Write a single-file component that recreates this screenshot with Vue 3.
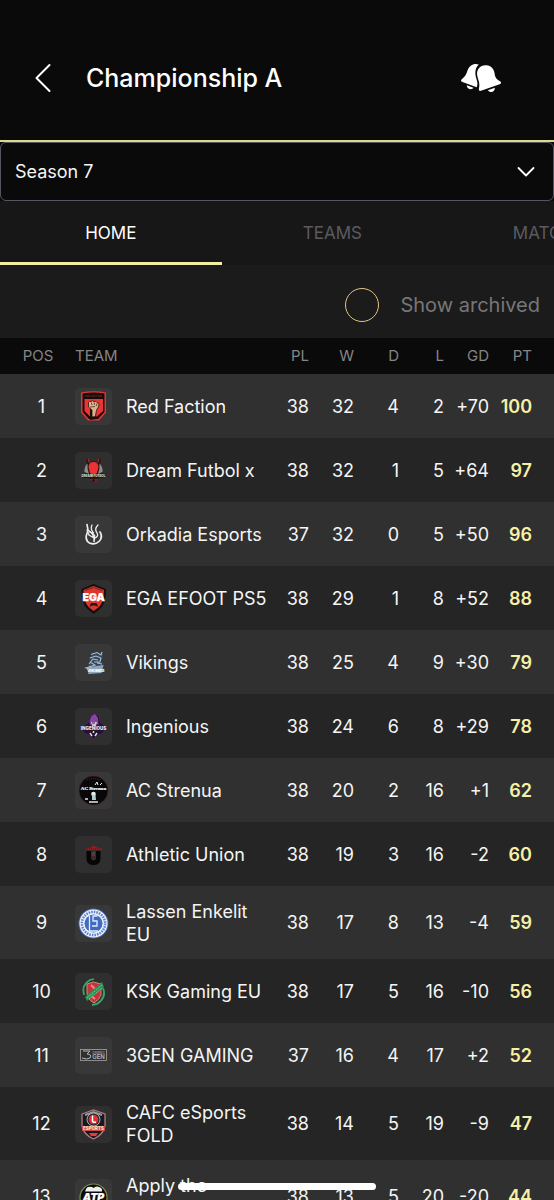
<script setup>
import { ref } from 'vue'

const season = ref('Season 7')
const tab = ref('HOME')
const tabs = ['HOME', 'TEAMS', 'MATCHES']
const archived = ref(false)

const rows = [
  ['Red Faction', 38, 32, 4, 2, '+70', 100],
  ['Dream Futbol x', 38, 32, 1, 5, '+64', 97],
  ['Orkadia Esports', 37, 32, 0, 5, '+50', 96],
  ['EGA EFOOT PS5', 38, 29, 1, 8, '+52', 88],
  ['Vikings', 38, 25, 4, 9, '+30', 79],
  ['Ingenious', 38, 24, 6, 8, '+29', 78],
  ['AC Strenua', 38, 20, 2, 16, '+1', 62],
  ['Athletic Union', 38, 19, 3, 16, '-2', 60],
  ['Lassen Enkelit EU', 38, 17, 8, 13, '-4', 59],
  ['KSK Gaming EU', 38, 17, 5, 16, '-10', 56],
  ['3GEN GAMING', 37, 16, 4, 17, '+2', 52],
  ['CAFC eSports FOLD', 38, 14, 5, 19, '-9', 47],
  ['Apply the Pressure', 38, 13, 5, 20, '-20', 44],
].map(([team, pl, w, d, l, gd, pt], i) => ({ pos: i + 1, team, pl, w, d, l, gd, pt }))
</script>

<template>
  <div class="app">
    <header class="bar">
      <button class="icon-btn back" type="button" aria-label="Back">
        <svg width="20" height="32" viewBox="0 0 20 32"><path d="M17.500 3 4.500 16 17.500 29" fill="none" stroke="#fff" stroke-width="2" stroke-linecap="round" stroke-linejoin="round" /></svg>
      </button>
      <h1>Championship A</h1>
      <button class="icon-btn" type="button" aria-label="Notifications">
        <svg width="42" height="32" viewBox="0 0 42 32" fill="#fff">
          <path d="M18.800 2.500C14 .6 9.500 3.300 7.700 8 6 12.500 5.800 14 1.800 17.200.5 18.300.9 19.600 2.500 20L16.600 25.200C18.400 22 17 18.800 16 15.500 14.700 10 15.500 5.500 18.800 2.500Z" />
          <path d="M18 7.500C19.500 4.500 23 3 26.500 3.300 31 3.700 34 7 34.600 11.500 35.200 16 36.500 17 40 19.200 41.600 20.300 41.300 21.700 39.600 22.200L21 28.800C19.300 29.300 18.600 28.300 18.900 26.800 20 21.500 18.800 19.500 17.800 16 16.800 12.600 16.700 10 18 7.500Z" />
          <path d="M6.700 23.200 13.500 25.700C11.500 28.500 7 27 6.700 23.200Z" />
          <path d="M27.800 28.300 34.800 25.800C35.200 29.800 30.500 31.800 27.800 28.300Z" />
        </svg>
      </button>
    </header>

    <div class="season">
      <select v-model="season" aria-label="Season">
        <option>Season 7</option>
        <option>Season 6</option>
      </select>
      <svg class="chevron" width="20" height="12" viewBox="0 0 20 12"><path d="M2.500 2 10 9.500 17.500 2" fill="none" stroke="#fff" stroke-width="1.800" stroke-linecap="round" stroke-linejoin="round" /></svg>
    </div>

    <nav class="tabs" aria-label="Sections">
      <button v-for="t in tabs" :key="t" type="button" :class="{ active: t === tab }" @click="tab = t">{{ t }}</button>
    </nav>

    <div class="archive">
      <label><input v-model="archived" type="checkbox" />Show archived</label>
    </div>

    <table>
      <thead>
        <tr>
          <th class="pos">POS</th><th class="team">TEAM</th><th class="pl">PL</th><th class="n">W</th><th class="n">D</th><th class="n">L</th><th class="n">GD</th><th class="pt">PT</th>
        </tr>
      </thead>
      <tbody>
        <tr v-for="r in rows" :key="r.pos">
          <td class="pos">{{ r.pos }}</td>
          <td class="team">
            <div class="club">
              <svg class="crest" width="37" height="37" viewBox="0 0 37 37" aria-hidden="true">
                <g v-if="r.pos === 1">
                  <path d="M6 4.500Q18.500 2 31 4.500V24.500L24 32.500H13L6 24.500Z" fill="#e83232" />
                  <path d="M7.500 5.500Q18.500 3.500 29.500 5.500V24L23 31H14L7.500 24Z" fill="#160b0c" />
                  <path d="M9.500 11H28V23L22 28.500H15L9.500 23Z" fill="#e73635" />
                  <path d="M15 21 20 22 21.500 31 15 32Z" fill="#181010" />
                  <path d="M13.500 14.500Q14.500 12.500 16 13.500 17.500 12 19 13.500 21 12.500 22 14.500 24 14.500 24 17L23.500 19Q21.500 21 21 24.500L20.500 28.500 17 29 17 22 13.500 19Z" fill="#ddb18c" stroke="#241210" stroke-width=".8" />
                  <path d="M16.300 14.500 17 17M19.200 14.300 19.500 17M21.800 15.500 21.500 18M15 19 20 18.500" stroke="#553025" stroke-width=".8" />
                  <text x="18.500" y="8.500" font-size="2.500" fill="#ad3030" text-anchor="middle">RED FACTION</text>
                </g>
                <g v-else-if="r.pos === 2">
                  <path d="M12 13 11.500 6.500Q13 5 14.500 10L18 9 22.500 10Q24 4 25.500 6.500L25 14 28 22 18.500 31 10 22Z" fill="#331011" />
                  <path d="M13 6.500 14.500 11M24 6.500 22.500 11" stroke="#bd2930" />
                  <path d="M13.500 15Q14 10 18.500 10 23 10 23.500 15L22 21 18.500 23 15 21Z" fill="#ed3235" />
                  <path d="M12.500 11.500Q9 15 9.500 20L14 22Q12 17 12.500 11.500M24.500 11.500Q28 15 27.500 20L23 22Q25 17 24.500 11.500" fill="#89908d" />
                  <path d="M6 22H31L28 26H9Z" fill="#171919" />
                  <text x="18.500" y="25" font-size="3" font-weight="800" fill="#d9e0dc" text-anchor="middle">DREAM FUTBOL</text>
                  <path d="M14 27H24L19 31Z" fill="#8b1b20" /><circle cx="18.500" cy="28.500" r="1.300" fill="#141414" />
                </g>
                <g v-else-if="r.pos === 3" fill="none" stroke="#eee" stroke-linecap="round">
                  <path d="M12.500 16Q9 24 14.500 27 20 29.500 24.500 25 28 20.500 25 16" stroke-width="1.700" />
                  <path d="M12 8.500 13 14 19.500 19.500 19 25.500" stroke-width="1.600" />
                  <path d="M12 14 14 19 19 22 17 17 15 16M17 9Q15 13 18.500 17M23 9Q19 13 22 17 24 20 20 22" stroke-width="1.300" />
                </g>
                <g v-else-if="r.pos === 4">
                  <path d="M6.500 9 18.500 4 31 9Q31 24 25 29L18.500 34 12.500 29Q6 23 6.500 9Z" fill="#160e0e" />
                  <path d="M8.500 10 18.500 6 29 10Q29 22 24 27L18.500 31 13.500 27Q8.500 21 8.500 10Z" fill="#dc372d" />
                  <path d="M10 10.500 18.500 7.500 27 10.500" stroke="#7e201c" fill="none" />
                  <text x="18.700" y="21" font-size="10.500" font-weight="900" fill="#fff" stroke="#fff" stroke-width=".25" text-anchor="middle">EGA</text>
                  <path d="M14.500 27 16 23H21.500L23 27 20.500 25.500H17Z" fill="#201111" />
                </g>
                <g v-else-if="r.pos === 5">
                  <path d="M11 24 15 19 14 14 18 10 16 9 22 8 26 10 27 7 28 12 26 17 29 20 27 30 13 29Z" fill="#33475e" />
                  <path d="M16 10.500 22 8.500 26 11 27 8M15 14 21 12 26 14 25 18 19 18M14 20 18 15 23 16M15 18 20 21 11 24 15 25 14 22M22 19 27 20" fill="none" stroke="#aebcc8" stroke-width="1.100" />
                  <path d="M15 23 28.500 21 26.500 29 13 30Z" fill="#8fa6b8" />
                  <text x="20.800" y="27.700" font-size="4" font-weight="900" fill="#fff" text-anchor="middle">VIKINGS</text>
                </g>
                <g v-else-if="r.pos === 6">
                  <path d="M14 11 18.500 5 24 8 25 14 31 19 28 25 23 27 19 31 14 27 9 25 6 19 13 15Z" fill="#22152d" stroke="#4e2968" stroke-width=".7" />
                  <path d="M14.500 13Q16 7 20 6L23 10 23.500 17 19 15 15 17Z" fill="#8944a3" />
                  <path d="M16 14H22L21 18H17Z" fill="#d2bfdb" /><path d="M17 15H20" stroke="#372343" />
                  <text x="18.500" y="22" font-size="4.500" font-weight="900" fill="#eadcf0" text-anchor="middle">INGENIOUS</text>
                  <circle cx="18.500" cy="26" r="3.300" fill="#201426" /><path d="M15 25 17 28M22 25 20 28M18.500 23V25" stroke="#e2d9e5" stroke-width="1.500" />
                </g>
                <g v-else-if="r.pos === 7">
                  <circle cx="18.500" cy="18.500" r="14.500" fill="#080808" stroke="#4b2326" stroke-width=".7" />
                  <path d="M12 8Q18.500 5 25 8" fill="none" stroke="#692b30" stroke-dasharray="1 1" />
                  <text x="18.500" y="18" font-size="5" font-weight="800" fill="#fff" stroke="#fff" stroke-width=".2" text-anchor="middle" class="serif">AC Strenua</text>
                  <path d="M20 13 22 10 23 13M25 13 27 11" stroke="#eee" fill="none" />
                  <circle cx="18.500" cy="22" r="2.300" fill="#e6eeee" /><path d="M17 23H20.500L21 28H17Z" fill="#b6cdd0" /><path d="M14 30H23M10 27H13" stroke="#e3e6e6" stroke-width="1.500" />
                </g>
                <g v-else-if="r.pos === 8">
                  <path d="M11 12.500 16 11.500 19 9.500 22 11.500 27 12.500V14H11Z" fill="#941b20" /><path d="M12 13H26" stroke="#4d1418" stroke-dasharray="1 1" />
                  <path d="M11.500 15H16V23Q18.500 26 21 23V15H25.500V23Q25 29 18.500 29 12 29 11.500 23Z" fill="#060606" />
                  <path d="M16.500 15H20.500V21L18.500 24 16.500 21Z" fill="#40282a" /><path d="M17 17H20M17 19H20" stroke="#6c5151" />
                </g>
                <g v-else-if="r.pos === 9">
                  <circle cx="18.500" cy="18.500" r="15" fill="#476fc0" /><circle cx="18.500" cy="18.500" r="14" fill="#edf2fb" />
                  <circle cx="18.500" cy="18.500" r="11.600" fill="none" stroke="#5f82cb" stroke-width="2.500" stroke-dasharray="1.600 1" />
                  <circle cx="18.500" cy="18.500" r="9" fill="#416bc1" />
                  <path d="M14.500 11V26H23M22.500 11H18V16H22V21H17" fill="none" stroke="#e6edfb" stroke-width="1.300" />
                </g>
                <g v-else-if="r.pos === 10">
                  <path d="M12 11 18.500 9 26 11 26 22Q24 27 19 30 12 26 12 20Z" fill="#c83239" stroke="#ca8d79" />
                  <path d="M16 12 23 19M15 22 20 26" stroke="#ee8580" stroke-width="2" />
                  <path d="M10 24 27 9 29 14 12 28Z" fill="#269458" />
                  <path d="M12 25 27 12M14 26 27 15" stroke="#8ed0a0" stroke-width=".8" stroke-dasharray="2 1" />
                  <path d="M9 22Q6 12 15 7L19 6M28 15Q32 24 22 31L17 32" fill="none" stroke="#37a765" stroke-width="1.800" />
                </g>
                <g v-else-if="r.pos === 11">
                  <rect x="5.500" y="12.500" width="26" height="11" fill="#303030" stroke="#a4a4a4" stroke-width=".8" />
                  <path d="M8 14H15L12 17Q17 17 15 21 12 23 7 21" fill="none" stroke="#bbb" />
                  <text x="23.500" y="22" font-size="6" font-weight="600" fill="#bbb" text-anchor="middle">GEN</text>
                  <text x="23.500" y="16.800" font-size="3" fill="#bbb" text-anchor="middle">GAMING</text>
                </g>
                <g v-else-if="r.pos === 12">
                  <path d="M7 8 18.500 4 30 8V20Q28 29 18.500 33 9 29 7 20Z" fill="#171a22" stroke="#b67979" stroke-width="1.300" />
                  <path d="M10 9 18.500 6 27 9" stroke="#929ba0" stroke-width="2" fill="none" />
                  <circle cx="18.500" cy="13.500" r="6.500" fill="#232937" stroke="#a7aeb0" /><circle cx="18.500" cy="13.500" r="4.800" fill="#e42d31" />
                  <path d="M17.500 9.500V15Q18 17 21 16" fill="none" stroke="#fff" stroke-width="1.500" />
                  <path d="M7 20H30V25H7Z" fill="#c84f4a" />
                  <text x="18.500" y="24.300" font-size="4.500" font-weight="800" fill="#f5dfc3" text-anchor="middle">ESPORTS</text>
                  <path d="M14 27H23L21 30H16Z" fill="#df403e" />
                </g>
                <g v-else>
                  <circle cx="18.500" cy="18.500" r="13.500" fill="#0b0b0b" stroke="#7d8c4b" stroke-width="1.200" />
                  <path d="M11 10Q12 7 17 8L18.500 9 21 7.500Q25 7 27 10V12.500H10Z" fill="#eee" />
                  <text x="18.500" y="21.500" font-size="10.500" font-weight="900" font-style="italic" fill="#fff" stroke="#fff" stroke-width=".2" text-anchor="middle">ATP</text>
                </g>
              </svg>
              <span>{{ r.team }}</span>
            </div>
          </td>
          <td>{{ r.pl }}</td><td>{{ r.w }}</td><td>{{ r.d }}</td><td>{{ r.l }}</td><td>{{ r.gd }}</td>
          <td class="pt">{{ r.pt }}</td>
        </tr>
      </tbody>
    </table>
    <div class="home-indicator"></div>
  </div>
</template>

<style>
body { background: #1b1b1b; }
</style>

<style scoped>
.app {
  position: relative;
  height: 100vh;
  overflow: hidden;
  background: #1b1b1b;
  color: #f5f5f5;
  font-family: Inter, "Liberation Sans", sans-serif;
}
button, select, input { font: inherit; color: inherit; margin: 0; }
.bar {
  display: flex;
  align-items: center;
  padding: 52px 52px 36px 32px;
  border-bottom: 2px solid #dcd98d;
  background: #0a0a0a;
}
.bar h1 {
  flex: 1;
  margin: 0;
  font-size: 25px;
  line-height: 52px;
  font-weight: 500;
  color: #fff;
}
.icon-btn {
  display: flex;
  padding: 0;
  border: 0;
  background: none;
}
.back { margin-right: 34px; }
.season { position: relative; background: #0a0a0a; }
.season select {
  display: block;
  width: 100%;
  height: 59px;
  padding: 0 14px;
  border: 1px solid #55565f;
  border-radius: 6px;
  background: #0a0a0b;
  font-size: 18px;
  appearance: none;
}
.chevron {
  position: absolute;
  right: 18px;
  top: 24px;
  pointer-events: none;
}
.tabs {
  display: flex;
  overflow: hidden;
  background: #171717;
}
.tabs button {
  flex: 0 0 40%;
  height: 64px;
  padding: 3px 0 0;
  border: 0;
  border-bottom: 3px solid transparent;
  background: none;
  color: #5b5b61;
  font-size: 17px;
}
.tabs .active { border-color: #f3eea0; color: #fff; }
.archive {
  display: flex;
  justify-content: flex-end;
  padding: 23px 14px 16px;
  background: #1b1b1b;
}
.archive label {
  display: flex;
  align-items: center;
  gap: 21px;
  color: #777;
  font-size: 20px;
  line-height: 34px;
}
.archive input {
  appearance: none;
  width: 34px;
  height: 34px;
  border: 1px solid #e5c384;
  border-radius: 50%;
}
.archive input:checked { background: #e5c384; }
table {
  width: 100%;
  border-collapse: collapse;
  table-layout: fixed;
}
thead tr { background: #0a0a0a; }
th {
  height: 36px;
  padding: 0;
  color: #858585;
  font-size: 15px;
  line-height: 18px;
  font-weight: 400;
  text-align: right;
}
th.pos { width: 75px; padding-left: 1px; box-sizing: border-box; }
th.team { text-align: left; }
th.pl { width: 34px; }
th.n { width: 45px; }
th.pt { width: 65px; box-sizing: border-box; }
tbody tr { background: #303030; }
tbody tr:nth-child(even) { background: #252525; }
td {
  padding: 0;
  font-size: 18px;
  line-height: 23px;
  text-align: right;
}
.pos { text-align: center; }
td.pos { padding-left: 8px; }
td.team { padding: 14px 0 13px; text-align: left; }
.club { display: flex; align-items: center; gap: 14px; }
.crest {
  flex: none;
  border-radius: 5px;
  background: #383838;
}
tr:nth-child(even) .crest { background: #2f2f2f; }
.crest .serif { font-family: "Liberation Serif", serif; }
.pt { padding-right: 22px; }
td.pt { color: #f6f0a7; font-weight: 600; }
.home-indicator {
  position: absolute;
  bottom: 10px;
  left: 50%;
  width: 198px;
  height: 7px;
  margin-left: -99px;
  border-radius: 4px;
  background: #fff;
}
</style>
